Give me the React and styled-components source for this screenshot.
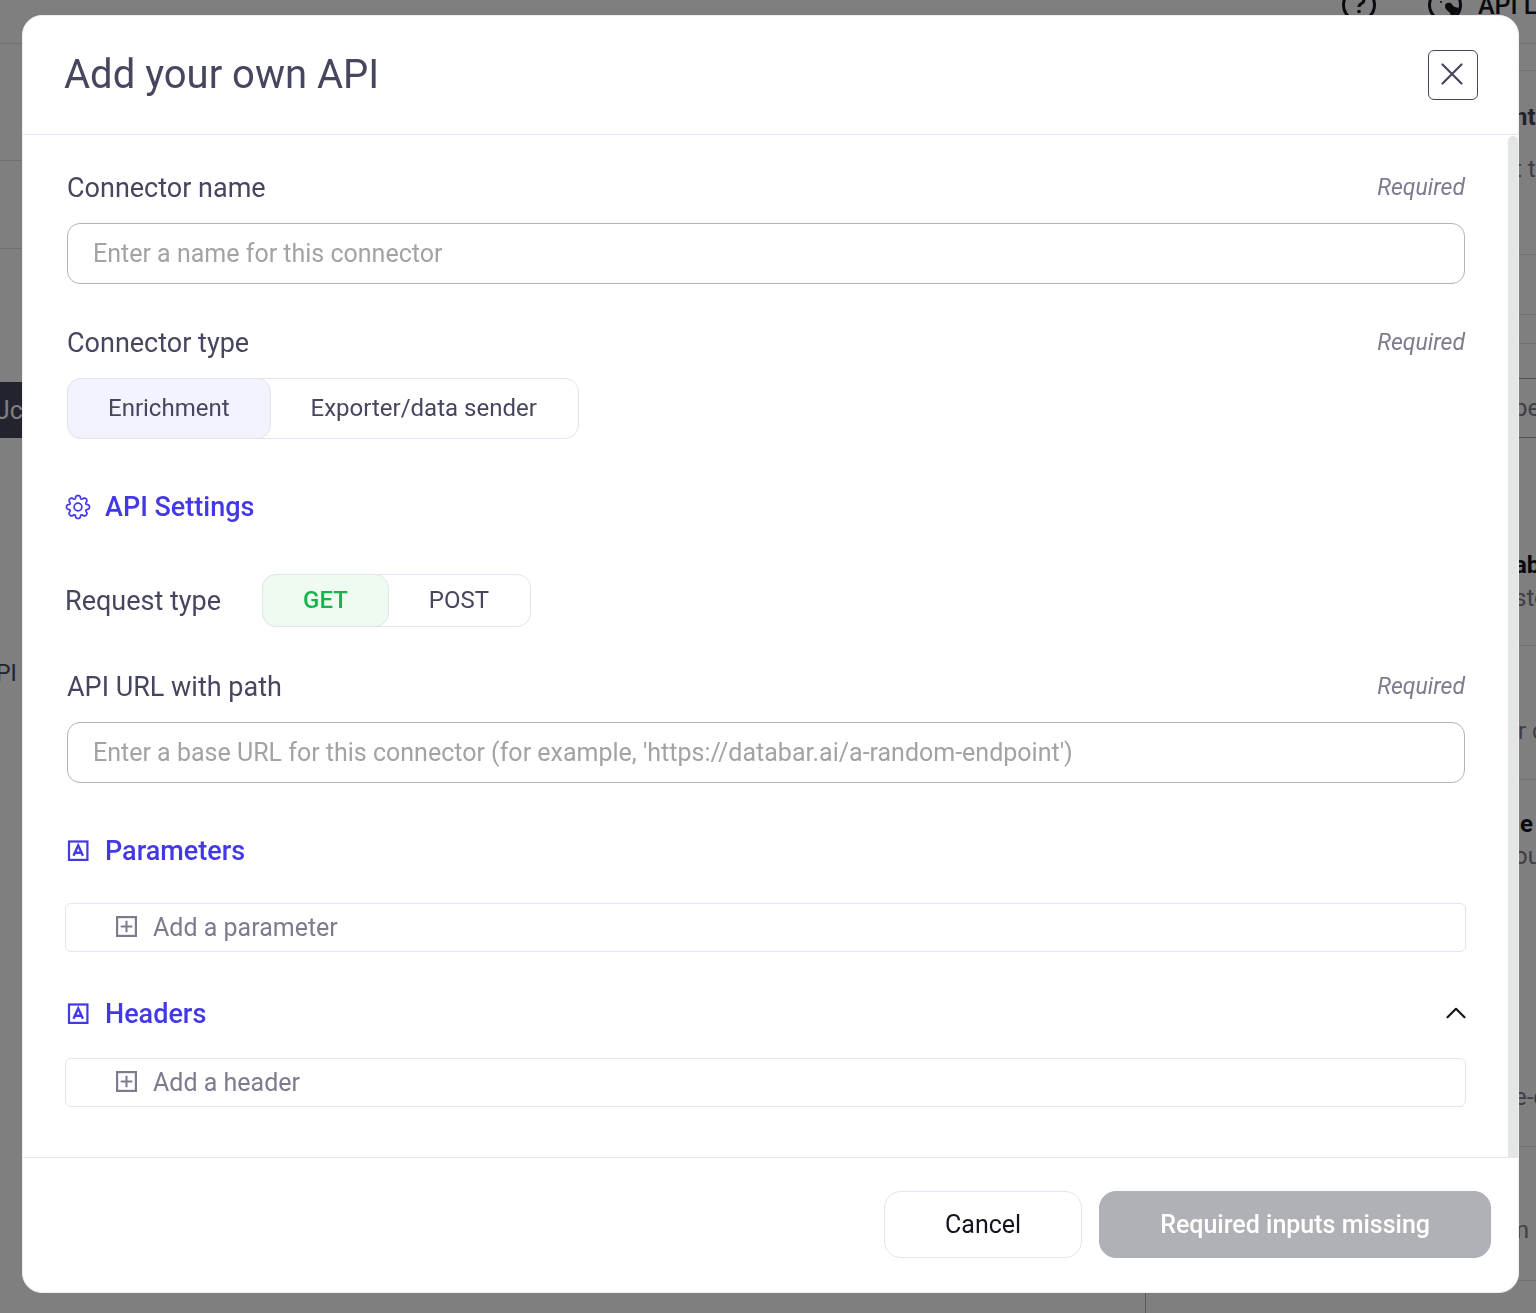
import React, { useState } from 'react';
import styled, { createGlobalStyle, css } from 'styled-components';

const GlobalStyle = createGlobalStyle`
  :root {
    --ink: #46465f;
    --black: #14141e;
    --muted: #7c7c8f;
    --indigo: #4338e6;
    --green: #17b34f;
    --line: #e3e4ed;
  }

  *,
  *::before,
  *::after {
    box-sizing: border-box;
  }

  body {
    margin: 0;
    overflow: hidden;
    background-color: #ffffff;
    color: var(--ink);
    font-family: Roboto, 'Liberation Sans', sans-serif;
  }

  button,
  input {
    font-family: inherit;
  }
`;

/* the page behind the dialog, scrolled a little */

const StyledPage = styled.div`
  display: flex;
  flex-direction: column;
  height: calc(100vh + 36px);
  margin-top: -36px;
  overflow: hidden;
`;

const StyledTopBar = styled.header`
  display: flex;
  align-items: center;
  justify-content: flex-end;
  flex: none;
  height: 80px;
  padding-top: 3px;
  border-bottom: 1px solid #dfe0e6;
  color: var(--black);

  svg {
    display: block;
    flex: none;
    margin-right: 52px;

    & + svg {
      margin-right: 16px;
    }
  }
`;

const StyledTopLink = styled.a`
  width: 58px;
  overflow: hidden;
  color: inherit;
  font-size: 25px;
  font-weight: 500;
  white-space: nowrap;
  text-decoration: none;
`;

const StyledColumns = styled.div`
  display: grid;
  flex: 1;
  grid-template-columns: 1fr 391px;
  min-height: 0;
`;

const StyledNavRow = styled.div`
  display: flex;
  align-items: center;
  height: ${({ $height }) => $height}px;
  border-bottom: ${({ $line }) => ($line ? '1px solid #dfe0e6' : 0)};
  background-color: ${({ $dark }) => ($dark ? '#46465f' : 'transparent')};
  color: ${({ $dark }) => ($dark ? '#ffffff' : 'var(--ink)')};
  font-size: ${({ $dark }) => ($dark ? 25 : 23)}px;
  text-indent: -4px;
`;

const StyledAside = styled.aside`
  min-width: 0;
  border-left: 1px solid #b4b5bc;
`;

const StyledAsideRow = styled.div`
  height: ${({ $height }) => $height}px;
  padding: ${({ $top }) => $top || 0}px 0 0 ${({ $left }) => $left || 368}px;
  border-bottom: 1px solid ${({ $strong }) => ($strong ? '#a2a2a6' : '#e2e3e9')};
  overflow: hidden;
  color: var(--muted);
  font-size: 24px;
  line-height: 32px;
  white-space: nowrap;

  strong {
    display: block;
    margin-bottom: ${({ $gap }) => $gap || 0}px;
    color: ${({ $ink }) => ($ink ? 'var(--ink)' : 'var(--black)')};
    font-weight: 700;
  }

  p {
    margin: 0;

    & + p {
      margin-top: 209px;
    }
  }
`;

/* dialog */

const StyledBackdrop = styled.div`
  position: fixed;
  inset: 0;
  padding: 15px 17px 20px 22px;
  background-color: rgba(0, 0, 0, 0.5);
`;

const StyledDialog = styled.section`
  display: flex;
  flex-direction: column;
  max-height: 100%;
  border: 1px solid #eeeef3;
  border-radius: 20px;
  background-color: #ffffff;
  overflow: hidden;
`;

const StyledHeader = styled.header`
  display: flex;
  align-items: center;
  justify-content: space-between;
  flex: none;
  padding: 34px 40px 34px 41px;
  border-bottom: 1px solid var(--line);

  h1 {
    margin: 0;
    font-size: 40px;
    font-weight: 400;
    line-height: 50px;
  }
`;

const StyledClose = styled.button`
  display: grid;
  place-items: center;
  width: 50px;
  height: 50px;
  padding: 0 2px 2px 0;
  border: 1px solid var(--ink);
  border-radius: 6px;
  background-color: transparent;
  color: var(--ink);
  cursor: pointer;
`;

const StyledBody = styled.div`
  display: grid;
  grid-template-columns: 1fr 10px;
  min-height: 0;
`;

const StyledForm = styled.form`
  padding: 37px 42px 51px;
`;

const StyledScrollbar = styled.div`
  margin-top: 1px;
  border-radius: 5px 5px 0 0;
  background-color: #e4e5e5;
`;

const StyledField = styled.div`
  padding: 0 1px 0 2px;
  margin-bottom: ${({ $last }) => ($last ? 52 : 43)}px;
`;

const StyledFieldHead = styled.div`
  display: flex;
  align-items: center;
  justify-content: space-between;
  margin-bottom: 19px;
  line-height: 32px;

  em {
    color: var(--muted);
    font-size: 23px;
  }
`;

const labelText = css`
  font-size: 27px;
  line-height: 32px;
`;

const StyledLabel = styled.label`
  ${labelText};
`;

const StyledInput = styled.input`
  display: block;
  width: 100%;
  height: 61px;
  padding: 0 25px;
  border: 1px solid #b4b4b8;
  border-radius: 13px;
  background-color: #ffffff;
  color: var(--ink);
  font-size: 25px;

  &::placeholder {
    color: #a3a3a6;
    opacity: 1;
  }
`;

const StyledSegments = styled.div`
  display: inline-flex;
  height: ${({ $small }) => ($small ? 53 : 61)}px;
  border: 1px solid var(--line);
  border-radius: 14px;
  vertical-align: top;
`;

const tones = {
  indigo: css`
    background-color: #f3f3ff;
  `,
  green: css`
    background-color: #effaf1;
    color: var(--green);
    font-weight: 500;
  `,
};

const StyledSegment = styled.button`
  margin: -1px 0 -1px -1px;
  padding: 0 40px 2px;
  border: 1px solid transparent;
  border-radius: 14px;
  background-color: transparent;
  color: var(--ink);
  font-size: 24px;
  cursor: pointer;

  ${({ $active, $tone }) =>
    $active &&
    css`
      border-color: var(--line);
      ${tones[$tone]};
    `}
`;

const StyledRequestRow = styled.div`
  display: flex;
  align-items: center;
  gap: 41px;
  margin-bottom: 44px;

  > span {
    ${labelText};
  }
`;

const StyledSectionHead = styled.div`
  display: flex;
  align-items: center;
  margin-bottom: ${({ $gap }) => $gap}px;
  color: var(--indigo);

  h2 {
    flex: 1;
    margin: 0 0 0 14px;
    font-size: 27px;
    font-weight: 500;
    line-height: 32px;
  }
`;

const StyledToggle = styled.button`
  display: block;
  padding: 0;
  border: 0;
  background-color: transparent;
  color: var(--black);
  cursor: pointer;
`;

const StyledAdd = styled.button`
  display: flex;
  align-items: center;
  gap: 16px;
  width: 100%;
  height: 49px;
  padding: 0 50px;
  border: 1px solid var(--line);
  border-radius: 6px;
  background-color: #ffffff;
  color: var(--muted);
  font-size: 25px;
  cursor: pointer;

  & + div {
    margin-top: 46px;
  }
`;

const StyledFooter = styled.footer`
  display: flex;
  flex: none;
  justify-content: flex-end;
  gap: 17px;
  padding: 33px 27px 34px;
  border-top: 1px solid var(--line);
`;

const StyledAction = styled.button`
  height: 67px;
  padding: 0 60px;
  border: 1px solid ${({ $filled }) => ($filled ? '#b0b1b6' : 'var(--line)')};
  border-radius: 17px;
  background-color: ${({ $filled }) => ($filled ? '#b0b1b6' : '#ffffff')};
  color: ${({ $filled }) => ($filled ? '#ffffff' : 'var(--black)')};
  font-size: 25px;
  font-weight: ${({ $filled }) => ($filled ? 500 : 400)};
`;

const HelpIcon = () => (
  <svg width="34" height="34" viewBox="0 0 34 34" fill="none" stroke="currentColor" strokeWidth="3">
    <circle cx="17" cy="17" r="15.5" />
    <path d="M12 11.5a5 4.5 0 1 1 7.5 4c-1.7.9-2.5 1.5-2.5 3.5" />
    <circle cx="17" cy="23.5" r="1.8" fill="currentColor" stroke="none" />
  </svg>
);

const GlobeIcon = () => (
  <svg width="34" height="34" viewBox="0 0 34 34" fill="none" stroke="currentColor" strokeWidth="3">
    <circle cx="17" cy="17" r="15.5" />
    <path
      d="M17 18c0-3 3-4 5.5-3 1.700.8 2 2.500 3.500 3.500 2 1 3.500 1.500 5 1-1 5-4 8-8.500 10-.5-2 .5-3-.5-4.500-2-2-5-3.500-5-7Z"
      fill="currentColor"
      stroke="none"
    />
    <circle cx="13" cy="14" r="1" fill="currentColor" stroke="none" />
  </svg>
);

const CloseIcon = () => (
  <svg width="22" height="22" viewBox="0 0 22 22" fill="none" stroke="currentColor" strokeWidth="2.2" strokeLinecap="round">
    <path d="M1.5 1.5l19 19M20.5 1.5l-19 19" />
  </svg>
);

// eight rounded teeth as a wave around the rim
const gearRim = Array.from({ length: 160 }, (_, i) => {
  const angle = (i / 160) * Math.PI * 2;
  const radius = 10 + 1.5 * Math.cos(angle * 8);
  const twist = angle + 0.045 * Math.sin(angle * 8) + 0.03 * Math.sin(angle * 16);
  return `${(13 + radius * Math.cos(twist)).toFixed(2)},${(13 + radius * Math.sin(twist)).toFixed(2)}`;
}).join(' ');

const GearIcon = () => (
  <svg width="26" height="26" viewBox="0 0 26 26" fill="none" stroke="currentColor" strokeWidth="1.7" strokeLinejoin="round">
    <polygon points={gearRim} />
    <circle cx="13" cy="13" r="3.9" />
  </svg>
);

const LetterIcon = () => (
  <svg width="26" height="24" viewBox="0 0 26 24" fill="none" stroke="currentColor" strokeWidth="2.2">
    <rect x="4" y="2.5" width="18.4" height="18.4" />
    <path d="M8.5 16.7L13.2 6.3l4.7 10.4M10.3 13.7h5.8" strokeWidth="2.4" />
  </svg>
);

const PlusBoxIcon = () => (
  <svg width="21" height="24" viewBox="0 0 21 24" fill="none" stroke="currentColor">
    <rect x="1.1" y="1.1" width="18.8" height="18.8" strokeWidth="2.2" />
    <path d="M10.5 4.7v11.6M4.7 10.5h11.6" strokeWidth="2" />
  </svg>
);

const ChevronIcon = () => (
  <svg width="20" height="12" viewBox="0 0 20 12" fill="none" stroke="currentColor" strokeWidth="2.2" strokeLinecap="round" strokeLinejoin="round">
    <path d="M1.5 10.2L10 1.8l8.5 8.4" />
  </svg>
);

const Field = ({ id, label, last, children }) => (
  <StyledField $last={last}>
    <StyledFieldHead>
      <StyledLabel as={id ? 'label' : 'span'} htmlFor={id}>
        {label}
      </StyledLabel>
      <em>Required</em>
    </StyledFieldHead>
    {children}
  </StyledField>
);

const Segments = ({ label, options, value, onChange, tone, small }) => (
  <StyledSegments role="group" aria-label={label} $small={small}>
    {options.map(option => (
      <StyledSegment
        key={option}
        type="button"
        aria-pressed={option === value}
        $active={option === value}
        $tone={tone}
        onClick={() => onChange(option)}
      >
        {option}
      </StyledSegment>
    ))}
  </StyledSegments>
);

const Page = () => (
  <StyledPage>
    <StyledTopBar>
      <HelpIcon />
      <GlobeIcon />
      <StyledTopLink href="#api">API L</StyledTopLink>
    </StyledTopBar>
    <StyledColumns>
      <nav>
        <StyledNavRow $height={117} $line />
        <StyledNavRow $height={88} $line />
        <StyledNavRow $height={133} />
        <StyledNavRow $height={56} $dark>
          Jc
        </StyledNavRow>
        <StyledNavRow $height={206} />
        <StyledNavRow $height={58}>PI</StyledNavRow>
      </nav>
      <StyledAside>
        <StyledAsideRow $height={27} />
        <StyledAsideRow $height={184} $top={30} $gap={20} $ink>
          <strong>nt</strong>
          <p>t t</p>
        </StyledAsideRow>
        <StyledAsideRow $height={60} />
        <StyledAsideRow $height={29} />
        <StyledAsideRow $height={35} $strong />
        <StyledAsideRow $height={59} $top={13} $strong>
          pe
        </StyledAsideRow>
        <StyledAsideRow $height={208} $top={111} $gap={1}>
          <strong>ab</strong>
          <p>sto</p>
        </StyledAsideRow>
        <StyledAsideRow $height={134} $top={69} $left={372}>
          <p>r c</p>
        </StyledAsideRow>
        <StyledAsideRow $height={367} $top={28}>
          <strong>&nbsp;e</strong>
          <p>ou</p>
          <p>e-c</p>
        </StyledAsideRow>
        <StyledAsideRow $height={134} $top={67} $left={362}>
          <p>m</p>
        </StyledAsideRow>
      </StyledAside>
    </StyledColumns>
  </StyledPage>
);

const App = () => {
  const [connectorType, setConnectorType] = useState('Enrichment');
  const [method, setMethod] = useState('GET');
  const [showHeaders, setShowHeaders] = useState(true);

  return (
    <>
      <GlobalStyle />
      <Page />
      <StyledBackdrop>
        <StyledDialog role="dialog" aria-labelledby="dialog-title">
          <StyledHeader>
            <h1 id="dialog-title">Add your own API</h1>
            <StyledClose type="button" aria-label="Close">
              <CloseIcon />
            </StyledClose>
          </StyledHeader>

          <StyledBody>
            <StyledForm id="connector-form">
              <Field id="connector-name" label="Connector name">
                <StyledInput id="connector-name" placeholder="Enter a name for this connector" />
              </Field>

              <Field label="Connector type" last>
                <Segments
                  label="Connector type"
                  options={['Enrichment', 'Exporter/data sender']}
                  value={connectorType}
                  onChange={setConnectorType}
                  tone="indigo"
                />
              </Field>

              <StyledSectionHead $gap={51}>
                <GearIcon />
                <h2>API Settings</h2>
              </StyledSectionHead>

              <StyledRequestRow>
                <span>Request type</span>
                <Segments
                  label="Request type"
                  options={['GET', 'POST']}
                  value={method}
                  onChange={setMethod}
                  tone="green"
                  small
                />
              </StyledRequestRow>

              <Field id="api-url" label="API URL with path" last>
                <StyledInput
                  id="api-url"
                  placeholder="Enter a base URL for this connector (for example, 'https://databar.ai/a-random-endpoint')"
                />
              </Field>

              <StyledSectionHead $gap={36}>
                <LetterIcon />
                <h2>Parameters</h2>
              </StyledSectionHead>
              <StyledAdd type="button">
                <PlusBoxIcon />
                Add a parameter
              </StyledAdd>

              <StyledSectionHead $gap={28}>
                <LetterIcon />
                <h2>Headers</h2>
                <StyledToggle
                  type="button"
                  aria-label="Toggle headers"
                  aria-expanded={showHeaders}
                  onClick={() => setShowHeaders(!showHeaders)}
                >
                  <ChevronIcon />
                </StyledToggle>
              </StyledSectionHead>
              {showHeaders && (
                <StyledAdd type="button">
                  <PlusBoxIcon />
                  Add a header
                </StyledAdd>
              )}
            </StyledForm>
            <StyledScrollbar />
          </StyledBody>

          <StyledFooter>
            <StyledAction type="button">Cancel</StyledAction>
            <StyledAction type="submit" form="connector-form" $filled disabled>
              Required inputs missing
            </StyledAction>
          </StyledFooter>
        </StyledDialog>
      </StyledBackdrop>
    </>
  );
};

export default App;
